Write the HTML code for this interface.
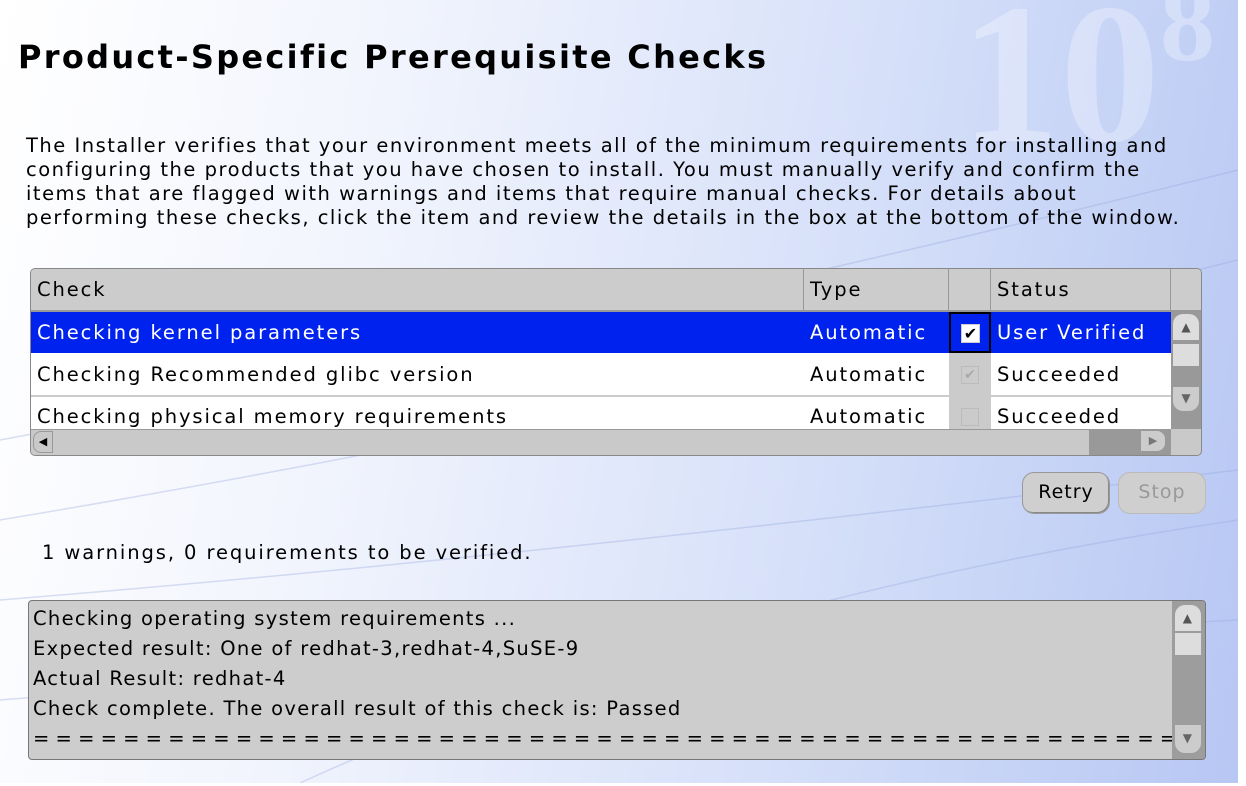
<!DOCTYPE html>
<html><head><style>
body{margin:0;width:1246px;height:786px;background:#fff;overflow:hidden;font-family:"DejaVu Sans","Liberation Sans",sans-serif;}
#bg{position:absolute;left:0;top:0;width:1238px;height:783px;background:linear-gradient(100deg,#ffffff 0%,#f1f4fd 30%,#d6e0f9 65%,#b7c7f3 100%);overflow:hidden}
.t{position:absolute;white-space:nowrap;color:#000}
h1{position:absolute;left:18px;top:38px;margin:0;font-size:32px;font-weight:bold;letter-spacing:2.3px}
.p{left:26px;font-size:19.5px;line-height:24px;top:134px;letter-spacing:1.5px}
.tbl{position:absolute;left:30px;top:268px;width:1170px;height:186px;border:1px solid #888;border-radius:5px;background:#c9c9c9;overflow:hidden}
.cell{position:absolute;font-size:19.5px;line-height:41px;padding-left:6px;white-space:nowrap;overflow:hidden;box-sizing:border-box;letter-spacing:1.9px}
.hdr{background:#cccccc;border-right:1px solid #999;border-bottom:2px solid #999;height:43px}
.btn{position:absolute;top:472px;height:40px;border:1px solid #999;border-radius:12px;background:#cfcfcf;font-size:19px;line-height:38px;text-align:center;box-shadow:inset -1px -1px 0 #888;letter-spacing:1px}
.ta{position:absolute;left:28px;top:600px;width:1176px;height:158px;border:1px solid #777;border-radius:4px;background:#cdcdcd;font-size:19.5px;line-height:30px;overflow:hidden;letter-spacing:1.3px}
</style></head><body>
<div id="bg">
<div class="t" style="left:960px;top:-40px;font-size:200px;font-family:'Liberation Serif',serif;color:rgba(255,255,255,0.3);font-weight:bold">10<span style="font-size:110px;vertical-align:top">8</span></div>
<svg width="1238" height="783" style="position:absolute;left:0;top:0" fill="none" stroke="rgba(150,165,220,0.35)" stroke-width="1.5">
<path d="M0 440 Q600 330 1238 170"/><path d="M0 520 Q600 420 1238 260"/><path d="M0 600 Q500 560 1238 470"/><path d="M0 700 Q500 660 1238 620"/><path d="M300 783 Q700 600 1238 520"/>
</svg>
<h1>Product-Specific Prerequisite Checks</h1>
<div class="t p">The Installer verifies that your environment meets all of the minimum requirements for installing and<br>configuring the products that you have chosen to install. You must manually verify and confirm the<br>items that are flagged with warnings and items that require manual checks. For details about<br>performing these checks, click the item and review the details in the box at the bottom of the window.</div>
<div class="tbl">
<div class="cell hdr" style="left:0;top:0;width:773px">Check</div>
<div class="cell hdr" style="left:773px;top:0;width:145px">Type</div>
<div class="cell hdr" style="left:918px;top:0;width:42px"></div>
<div class="cell hdr" style="left:960px;top:0;width:180px">Status</div>
<div class="cell hdr" style="left:1140px;top:0;width:30px;border-right:0"></div>
<div style="position:absolute;left:0;top:43px;width:1140px;height:41px;background:#0022ee"></div>
<div class="cell" style="left:0;top:43px;color:#fff">Checking kernel parameters</div>
<div class="cell" style="left:773px;top:43px;color:#fff">Automatic</div>
<div style="position:absolute;left:918px;top:43px;width:38px;height:37px;border:2px solid #000;"></div>
<div style="position:absolute;left:930px;top:55px;width:17px;height:17px;background:#fff;border:1px solid #ccc;font-size:16px;line-height:17px;text-align:center;font-weight:bold">✔</div>
<div class="cell" style="left:960px;top:43px;color:#fff">User Verified</div>
<div style="position:absolute;left:0;top:84px;width:1140px;height:84px;background:#fff"></div>
<div style="position:absolute;left:0;top:126px;width:1140px;height:2px;background:#ccc"></div>
<div style="position:absolute;left:918px;top:84px;width:42px;height:84px;background:#cbcbcb"></div>
<div class="cell" style="left:0;top:85px">Checking Recommended glibc version</div>
<div class="cell" style="left:773px;top:85px">Automatic</div>
<div class="cell" style="left:960px;top:85px">Succeeded</div>
<div style="position:absolute;left:930px;top:97px;width:16px;height:16px;border:1px solid #bbb;color:#aaa;font-size:14px;line-height:16px;text-align:center">✔</div>
<div class="cell" style="left:0;top:127px;height:33px;line-height:41px">Checking physical memory requirements</div>
<div class="cell" style="left:773px;top:127px;height:33px">Automatic</div>
<div class="cell" style="left:960px;top:127px;height:33px">Succeeded</div>
<div style="position:absolute;left:930px;top:139px;width:16px;height:16px;border:1px solid #bbb"></div>
<div style="position:absolute;left:0;top:160px;width:1140px;height:26px;background:#c9c9c9;border-top:1px solid #999"></div>
<div style="position:absolute;left:2px;top:162px;width:18px;height:20px;border:1px solid #999;border-radius:8px 0 0 8px;font-size:11px;line-height:20px;text-align:center">◀</div>
<div style="position:absolute;left:1058px;top:161px;width:82px;height:25px;background:#999"></div>
<div style="position:absolute;left:1110px;top:162px;width:24px;height:20px;border-radius:0 8px 8px 0;background:#ccc;font-size:11px;line-height:20px;text-align:center;color:#777">▶</div>
<div style="position:absolute;left:1140px;top:43px;width:30px;height:117px;background:#999"></div>
<div style="position:absolute;left:1142px;top:45px;width:26px;height:26px;background:#ddd;border-radius:10px 10px 0 0;font-size:12px;line-height:26px;text-align:center;color:#555">▲</div>
<div style="position:absolute;left:1142px;top:75px;width:26px;height:22px;background:#ddd"></div>
<div style="position:absolute;left:1142px;top:118px;width:26px;height:24px;background:#ccc;border-radius:0 0 10px 10px;font-size:12px;line-height:22px;text-align:center;color:#666">▼</div>
</div>
<div class="btn" style="left:1022px;width:86px">Retry</div>
<div class="btn" style="left:1118px;width:86px;color:#999;box-shadow:none;border-color:#bbb">Stop</div>
<div class="t" style="left:42px;top:541px;font-size:19.5px;letter-spacing:1.9px">1 warnings, 0 requirements to be verified.</div>
<div class="ta">
<div style="position:absolute;left:4px;top:3px;white-space:nowrap">Checking operating system requirements ...<br>Expected result: One of redhat-3,redhat-4,SuSE-9<br>Actual Result: redhat-4<br>Check complete. The overall result of this check is: Passed<br><span style="letter-spacing:0">= = = = = = = = = = = = = = = = = = = = = = = = = = = = = = = = = = = = = = = = = = = = = = = = = = = = = = = = = = = = =</span></div>
<div style="position:absolute;left:1143px;top:0;width:33px;height:158px;background:#9d9d9d"></div>
<div style="position:absolute;left:1146px;top:4px;width:26px;height:26px;background:#ddd;border-radius:10px 10px 0 0;font-size:12px;line-height:26px;text-align:center;color:#555">▲</div>
<div style="position:absolute;left:1146px;top:32px;width:26px;height:22px;background:#ddd"></div>
<div style="position:absolute;left:1146px;top:124px;width:26px;height:28px;background:#ccc;border-radius:0 0 10px 10px;font-size:12px;line-height:26px;text-align:center;color:#666">▼</div>
</div>
</div>
</body></html>
